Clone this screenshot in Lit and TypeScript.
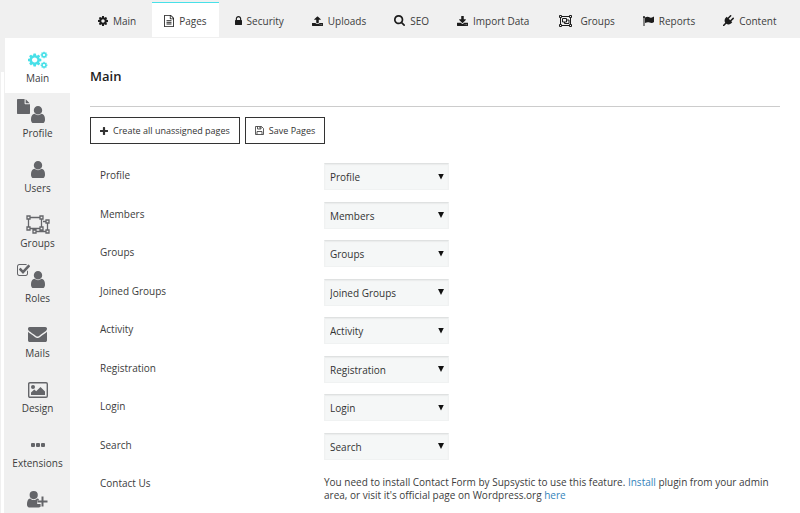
import { LitElement, html, svg, css, nothing } from "lit";
import type { SVGTemplateResult } from "lit";
import { customElement } from "lit/decorators.js";
import { classMap } from "lit/directives/class-map.js";

const COG =
  "M1152 896q0-106-75-181t-181-75-181 75-75 181 75 181 181 75 181-75 75-181zm512-109v222q0 12-8 23t-20 13l-185 28q-19 54-39 91 35 50 107 138 10 12 10 25t-9 23q-27 37-99 108t-94 71q-12 0-26-9l-138-108q-44 23-91 38-16 136-29 186-7 28-36 28h-222q-14 0-24.500-8.500t-11.500-21.500l-28-184q-49-16-90-37l-141 107q-10 9-25 9-14 0-25-11-126-114-165-168-7-10-7-23 0-12 8-23 15-21 51-66.500t54-70.500q-27-50-41-99l-183-27q-13-2-21-12.500t-8-23.500v-222q0-12 8-23t19-13l186-28q14-46 39-92-40-57-107-138-10-12-10-24 0-10 9-23 26-36 98.500-107.500t94.500-71.500q13 0 26 10l138 107q44-23 91-38 16-136 29-186 7-28 36-28h222q14 0 24.500 8.500t11.500 21.500l28 184q49 16 90 37l142-107q9-9 24-9 13 0 25 10 129 119 165 170 7 8 7 22 0 12-8 23-15 21-51 66.500t-54 70.500q26 50 41 98l183 28q13 2 21 12.500t8 23.500z";
const USER =
  "M1536 1399q0 109-62.500 187t-150.500 78h-854q-88 0-150.500-78t-62.500-187q0-85 8.500-160.500t31.500-152 58.500-131 94-89 134.500-34.500q131 128 313 128t313-128q76 0 134.500 34.500t94 89 58.500 131 31.500 152 8.500 160.500zm-256-887q0 159-112.500 271.500t-271.500 112.500-271.500-112.500-112.500-271.500 112.500-271.500 271.500-112.500 271.500 112.500 112.500 271.500z";
const PLUS =
  "M1600 736v192q0 40-28 68t-68 28h-416v416q0 40-28 68t-68 28h-192q-40 0-68-28t-28-68v-416h-416q-40 0-68-28t-28-68v-192q0-40 28-68t68-28h416v-416q0-40 28-68t68-28h192q40 0 68 28t28 68v416h416q40 0 68 28t28 68z";

interface Glyph {
  w: number;
  h: number;
  box: string;
  body: SVGTemplateResult;
}

const glyphs: Record<string, Glyph> = {
  cog: { w: 10, h: 10, box: "128 128 1536 1536", body: svg`<path d=${COG} />` },
  doc: {
    w: 10,
    h: 12,
    box: "128 0 1536 1792",
    body: svg`<path d="M1596 380q28 28 48 76t20 88v1152q0 40-28 68t-68 28h-1344q-40 0-68-28t-28-68v-1600q0-40 28-68t68-28h896q40 0 88 20t76 48zm-444-244v376h376q-10-29-22-41l-313-313q-12-12-41-22zm384 1528v-1024h-416q-40 0-68-28t-28-68v-416h-768v1536h1280z" /><path d="M512 768h768v128h-768zM512 1024h768v128h-768zM512 1280h768v128h-768z" />`,
  },
  lock: {
    w: 7,
    h: 9,
    box: "320 128 1152 1408",
    body: svg`<path d="M640 768h512v-192q0-106-75-181t-181-75-181 75-75 181v192zm832 96v576q0 40-28 68t-68 28h-960q-40 0-68-28t-28-68v-576q0-40 28-68t68-28h32v-192q0-184 132-316t316-132 316 132 132 316v192h32q40 0 68 28t28 68z" />`,
  },
  upload: {
    w: 11,
    h: 10,
    box: "64 0 1664 1664",
    body: svg`<path d="M1344 1472q0-26-19-45t-45-19-45 19-19 45 19 45 45 19 45-19 19-45zm256 0q0-26-19-45t-45-19-45 19-19 45 19 45 45 19 45-19 19-45zm128-224v320q0 40-28 68t-68 28h-1472q-40 0-68-28t-28-68v-320q0-40 28-68t68-28h427q21 56 70.500 92t110.500 36h256q61 0 110.500-36t70.500-92h427q40 0 68 28t28 68zm-325-648q-17 40-59 40h-256v448q0 26-19 45t-45 19h-256q-26 0-45-19t-19-45v-448h-256q-42 0-59-40-17-39 14-69l448-448q18-19 45-19t45 19l448 448q31 30 14 69z" />`,
  },
  search: {
    w: 11,
    h: 11,
    box: "64 128 1664 1664",
    body: svg`<path d="M1216 832q0-185-131.500-316.500t-316.500-131.500-316.500 131.500-131.500 316.500 131.500 316.500 316.500 131.500 316.500-131.500 131.500-316.500zm512 832q0 52-38 90t-90 38q-54 0-90-38l-343-342q-179 124-399 124-143 0-273.500-55.500t-225-150-150-225-55.500-273.500 55.500-273.500 150-225 225-150 273.500-55.500 273.500 55.500 225 150 150 225 55.500 273.500q0 220-124 399l343 343q37 37 37 90z" />`,
  },
  download: {
    w: 11,
    h: 10,
    box: "64 0 1664 1536",
    body: svg`<path d="M1344 1344q0-26-19-45t-45-19-45 19-19 45 19 45 45 19 45-19 19-45zm256 0q0-26-19-45t-45-19-45 19-19 45 19 45 45 19 45-19 19-45zm128-224v320q0 40-28 68t-68 28h-1472q-40 0-68-28t-28-68v-320q0-40 28-68t68-28h465l135 136q58 56 136 56t136-56l136-136h464q40 0 68 28t28 68zm-325-569q17 41-14 70l-448 448q-18 19-45 19t-45-19l-448-448q-31-29-14-70 17-39 59-39h256v-448q0-26 19-45t45-19h256q26 0 45 19t19 45v448h256q42 0 59 39z" />`,
  },
  group: {
    w: 13,
    h: 12,
    box: "0 0 26 24",
    body: svg`<path fill="none" stroke="currentColor" stroke-width="2" d="M1 1h4v4H1zM21 1h4v4h-4zM1 19h4v4H1zM21 19h4v4h-4zM5 3h16M5 21h16M3 5v14M23 5v14M7 7h8v7H7zM16 10h4v7h-9v-3" />`,
  },
  flag: {
    w: 11,
    h: 10,
    box: "0 0 22 20",
    body: svg`<circle cx="2" cy="2" r="2" /><path d="M1 2h2v18H1zM4 3c5-3 7-1 10 0s5 0 8-2v11c-4 3-6 2-9 1s-5-1-9 1z" />`,
  },
  plug: {
    w: 11,
    h: 11,
    box: "0 0 1792 1792",
    body: svg`<path d="M1755 453q37 38 37 90.500t-37 90.500l-401 400 150 150-160 160q-163 163-389.500 186.500t-411.500-100.500l-362 362h-181v-181l362-362q-124-185-100.500-411.500t186.500-389.500l160-160 150 150 400-401q38-37 91-37t90 37 37 90.500-37 90.500l-400 401 234 234 401-400q38-37 91-37t90 37z" />`,
  },
  plus: { w: 8, h: 8, box: "192 128 1408 1408", body: svg`<path d=${PLUS} />` },
  floppy: {
    w: 9,
    h: 9,
    box: "0 0 18 18",
    body: svg`<path fill="none" stroke="currentColor" stroke-width="1.600" d="M1 1h12l4 4v12H1zM5 1v5h7V1M4 17v-6h10v6" /><path d="M9 2h2v3H9z" />`,
  },
  cogs: {
    w: 20,
    h: 18,
    box: "0 0 1920 1792",
    body: svg`<path fill-rule="evenodd" d="M896 896q0-106-75-181t-181-75-181 75-75 181 75 181 181 75 181-75 75-181zM1280 804v185q0 10-7 19.500t-16 10.500l-155 24q-11 35-32 76 34 48 90 115 7 11 7 20 0 12-7 19-23 30-82.500 89.500t-78.500 59.500q-11 0-21-7l-115-90q-37 19-77 31-11 108-23 155-7 24-30 24h-186q-11 0-20-7.500t-10-17.500l-23-153q-34-10-75-31l-118 89q-7 7-20 7-11 0-21-8-144-133-144-160 0-9 7-19 10-14 41-53t47-61q-23-44-35-82l-152-24q-10-1-17-9.500t-7-19.500v-185q0-10 7-19.500t16-10.500l155-24q11-35 32-76-34-48-90-115-7-11-7-20 0-12 7-20 22-30 82-89t79-59q11 0 21 7l115 90q34-18 77-32 11-108 23-154 7-24 30-24h186q11 0 20 7.500t10 17.500l23 153q34 10 75 31l118-89q8-7 20-7 11 0 21 8 144 133 144 160 0 8-7 19-12 16-42 54t-45 60q23 48 34 82l152 23q10 2 17 10.500t7 19.500z" />
      <g transform="translate(1152 10) scale(.43)"><path d=${COG} /></g>
      <g transform="translate(1152 1024) scale(.43)"><path d=${COG} /></g>`,
  },
  user: { w: 14, h: 17, box: "256 128 1280 1536", body: svg`<path d=${USER} />` },
  file: {
    w: 13,
    h: 15,
    box: "128 0 1536 1792",
    body: svg`<path d="M1152 512v-472q22 14 36 28l408 408q14 14 28 36h-472zm-128 32q0 40 28 68t68 28h544v1056q0 40-28 68t-68 28h-1344q-40 0-68-28t-28-68v-1600q0-40 28-68t68-28h800v544z" />`,
  },
  check: {
    w: 13,
    h: 12,
    box: "64 128 1664 1408",
    body: svg`<path d="M1472 930v318q0 119-84.500 203.500t-203.500 84.500h-832q-119 0-203.500-84.500t-84.500-203.500v-832q0-119 84.500-203.500t203.500-84.500h832q63 0 117 25 15 7 18 23 3 17-9 29l-49 49q-10 10-23 10-3 0-9-2-23-6-45-6h-832q-66 0-113 47t-47 113v832q0 66 47 113t113 47h832q66 0 113-47t47-113v-254q0-13 9-22l64-64q10-10 23-10 6 0 12 3 20 8 20 29zm231-489l-814 814q-24 24-57 24t-57-24l-430-430q-24-24-24-57t24-57l110-110q24-24 57-24t57 24l263 263 647-647q24-24 57-24t57 24l110 110q24 24 24 57t-24 57z" />`,
  },
  objects: {
    w: 24,
    h: 19,
    box: "0 0 24 19",
    body: svg`<path fill="none" stroke="currentColor" stroke-width="1.300" d="M1 1h3v3H1zM14 1h3v3h-3zM1 12h3v3H1zM14 12h3v3h-3zM20 5h3v3h-3zM20 15h3v3h-3zM7 15h3v3H7zM4 2.500h10M4 13.500h10M2.500 4v8M15.500 4v8M17 6.500h3M21.500 8v7M10 16.500h10M8.500 15v-1.500" />`,
  },
  mail: {
    w: 19,
    h: 15,
    box: "0 256 1792 1408",
    body: svg`<path d="M1792 710v794q0 66-47 113t-113 47h-1472q-66 0-113-47t-47-113v-794q44 49 101 87 362 246 497 345 57 42 92.500 65.500t94.500 48 110 24.500h2q51 0 110-24.500t94.500-48 92.500-65.500q170-123 498-345 57-39 100-87zm0-294q0 79-49 151t-122 123q-376 261-468 325-10 7-42.500 30.500t-54 38-52 32.500-57.500 27-50 9h-2q-23 0-50-9t-57.500-27-52-32.500-54-38-42.500-30.500q-91-64-262-182.500t-205-142.500q-62-42-117-115.500t-55-136.500q0-78 41.500-130t118.500-52h1472q65 0 112.500 47t47.500 113z" />`,
  },
  picture: {
    w: 20,
    h: 16,
    box: "0 0 20 16",
    body: svg`<rect x=".7" y=".7" width="18.600" height="14.600" rx="1.200" fill="none" stroke="currentColor" stroke-width="1.400" /><circle cx="5" cy="5" r="2" /><path d="M3 13v-2.500L6.300 7.500 8.200 9.300 12.500 5 17 9.500V13z" />`,
  },
  dots: {
    w: 14,
    h: 4,
    box: "0 0 14 4",
    body: svg`<rect width="4" height="4" rx="1" /><rect x="5" width="4" height="4" rx="1" /><rect x="10" width="4" height="4" rx="1" />`,
  },
  userPlus: {
    w: 21,
    h: 17,
    box: "0 0 21 17",
    body: svg`<path d="M6.700 0a4 4 0 0 1 0 8.200a4 4 0 0 1 0-8.200zM3.300 7.400c2 2 4.800 2 6.800 0 .8 0 1.300.2 1.700.6v1.500h-1.600v3.400h3.400v2.800c-.6.500-1.200.7-2 .7H2.200C.8 16.400 0 15.300 0 13.800c0-3.300.8-6.300 3.300-6.400z" /><path d="M14.500 5.500h2v4h4v2h-4v4h-2v-4h-4v-2h4z" />`,
  },
};

const icon = (name: string) => {
  const g = glyphs[name];
  return html`<svg class="icon" width=${g.w} height=${g.h} viewBox=${g.box} preserveAspectRatio="none" aria-hidden="true">${g.body}</svg>`;
};

const tabs = [
  { label: "Main", icon: "cog" },
  { label: "Pages", icon: "doc", active: true },
  { label: "Security", icon: "lock" },
  { label: "Uploads", icon: "upload" },
  { label: "SEO", icon: "search" },
  { label: "Import Data", icon: "download" },
  { label: "Groups", icon: "group", wide: true },
  { label: "Reports", icon: "flag" },
  { label: "Content", icon: "plug" },
];

const sections = [
  { label: "Main", icon: "cogs", active: true },
  { label: "Profile", icon: "user", badge: "file" },
  { label: "Users", icon: "user" },
  { label: "Groups", icon: "objects" },
  { label: "Roles", icon: "user", badge: "check" },
  { label: "Mails", icon: "mail" },
  { label: "Design", icon: "picture" },
  { label: "Extensions", icon: "dots" },
  { label: "", icon: "userPlus" },
];

const pages = ["Profile", "Members", "Groups", "Joined Groups", "Activity", "Registration", "Login", "Search"];

@customElement("app-root")
export class AppRoot extends LitElement {
  static styles = css`
    :host {
      display: flex;
      flex-direction: column;
      height: 100vh;
      overflow: hidden;
      background: #f0f0f0;
      color: #3c3c3c;
      font: 10px/14px "Open Sans", "Noto Sans", sans-serif;
    }
    * {
      box-sizing: border-box;
    }
    .icon {
      display: block;
      flex: none;
      fill: currentColor;
    }
    .tabs {
      display: flex;
      flex: none;
      gap: 4px;
      height: 38px;
      padding: 2px 0 1px 86px;
    }
    .tab {
      display: flex;
      align-items: center;
      gap: 5px;
      padding: 1px 12px 0;
      border-top: 1px solid transparent;
      color: inherit;
      text-decoration: none;
      white-space: nowrap;
    }
    .tab .icon {
      color: #1c1c1c;
    }
    .tab.wide {
      gap: 8px;
      padding-left: 14px;
    }
    .tab.active {
      background: #fff;
      border-top-color: #48e0e8;
    }
    .body {
      display: flex;
      flex: 1;
      min-height: 0;
      background: #fff;
    }
    .edge {
      flex: none;
      width: 5px;
      background: linear-gradient(#f0f0f0, #f0f0f0) 0 0 / 5px 34px no-repeat,
        linear-gradient(90deg, #f0f0f0 1px, #fff 1px, #fff 4px, #f0f0f0 4px);
    }
    .side {
      flex: none;
      width: 65px;
      background: #f0f0f0;
    }
    .section {
      position: relative;
      display: grid;
      grid-template-rows: 19px 14px;
      gap: 2px;
      justify-items: center;
      align-items: center;
      height: 55px;
      padding-top: 12px;
      color: inherit;
      text-decoration: none;
    }
    .section .icon {
      color: #646569;
    }
    .section.active {
      background: #fff;
    }
    .section.active .icon {
      color: #48e0e8;
    }
    .badge {
      position: absolute;
      left: 12px;
      top: 6px;
    }
    .main {
      flex: 1;
      min-width: 0;
      padding: 29px 20px 0;
    }
    .title {
      margin: 0;
      padding-bottom: 20px;
      border-bottom: 1px solid #ccc;
      color: #222;
      font-size: 13px;
      font-weight: 600;
      line-height: 19px;
    }
    .actions {
      display: flex;
      gap: 5px;
      padding: 10px 0 18px;
    }
    .button {
      display: flex;
      align-items: center;
      gap: 5px;
      height: 27px;
      padding: 0 9px;
      border: 1px solid #333;
      background: #fff;
      color: #333;
      font: inherit;
      font-size: 9px;
    }
    .rows {
      display: grid;
      grid-template-rows: repeat(8, 1fr);
      height: 308px;
    }
    .row {
      display: grid;
      grid-template-columns: 224px 1fr;
      padding-left: 10px;
    }
    .label {
      padding-top: 6px;
    }
    .picker {
      display: grid;
      width: 125px;
      height: 27px;
      margin-top: 1px;
    }
    .picker::after {
      content: "";
      grid-area: 1 / 1;
      place-self: center end;
      width: 6px;
      height: 6px;
      margin-right: 5px;
      background: #111;
      clip-path: polygon(0 0, 100% 0, 50% 100%);
      pointer-events: none;
    }
    .select {
      grid-area: 1 / 1;
      appearance: none;
      padding: 1px 20px 0 5px;
      border: 1px solid #f0f2f2;
      border-top: 1px solid #dfe1e1;
      border-radius: 0;
      background: #f5f7f7;
      box-shadow: inset 0 1px 1px #eaecec;
      color: #333;
      font: inherit;
    }
    .note {
      margin: 0;
      padding-top: 6px;
      line-height: 13px;
    }
    .link {
      color: #3383bb;
      text-decoration: none;
    }
  `;

  render() {
    return html`
      <nav class="tabs">
        ${tabs.map(
          (t) => html`<a href="#" class=${classMap({ tab: true, active: !!t.active, wide: !!t.wide })}>${icon(t.icon)}${t.label}</a>`
        )}
      </nav>
      <div class="body">
        <div class="edge"></div>
        <nav class="side">
          ${sections.map(
            (s) => html`<a href="#" class=${classMap({ section: true, active: !!s.active })}>
              ${s.badge ? html`<span class="badge">${icon(s.badge)}</span>` : nothing}${icon(s.icon)}<span>${s.label}</span>
            </a>`
          )}
        </nav>
        <main class="main">
          <h1 class="title">Main</h1>
          <div class="actions">
            <button class="button" type="button">${icon("plus")}Create all unassigned pages</button>
            <button class="button" type="button">${icon("floppy")}Save Pages</button>
          </div>
          <div class="rows">
            ${pages.map(
              (p, i) => html`<div class="row">
                <label class="label" for="page-${i}">${p}</label>
                <div class="picker">
                  <select class="select" id="page-${i}"><option>${p}</option></select>
                </div>
              </div>`
            )}
          </div>
          <div class="row">
            <span class="label">Contact Us</span>
            <p class="note">
              You need to install Contact Form by Supsystic to use this feature. <a class="link" href="#">Install</a> plugin from your admin area, or visit it's official page on Wordpress.org <a class="link" href="#">here</a>
            </p>
          </div>
        </main>
      </div>
    `;
  }
}
